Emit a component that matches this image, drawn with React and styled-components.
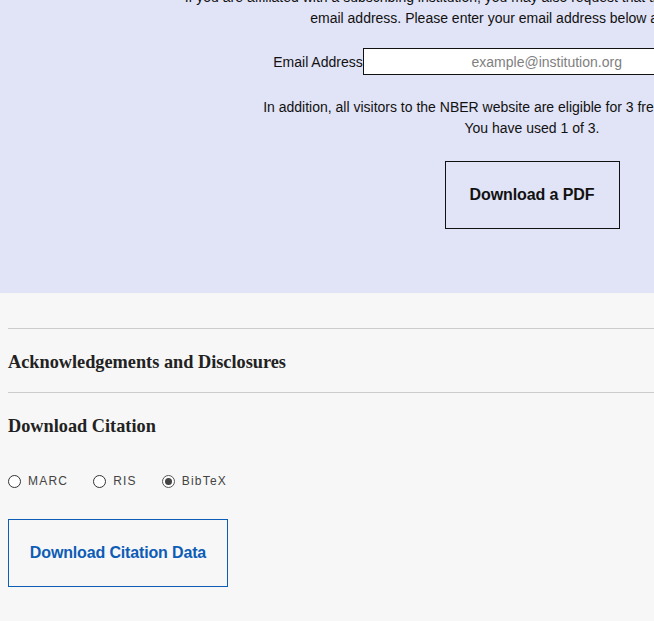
import React, { useState } from "react";
import styled, { createGlobalStyle } from "styled-components";

const GlobalStyle = createGlobalStyle`
  html, body {
    margin: 0;
    padding: 0;
    overflow: hidden;
    background: #f7f7f7;
  }
`;

const Page = styled.div`
  width: 1064px;
  font-family: "Liberation Sans", Arial, sans-serif;
  color: #111;
`;

const Panel = styled.section`
  background: #e1e3f6;
  margin-top: -13px;
  padding: 0 0 64px;
  display: flex;
  flex-direction: column;
  align-items: center;
`;

const Para = styled.p`
  margin: 0;
  font-size: 14px;
  line-height: 21px;
  text-align: center;
  white-space: nowrap;
`;

const EmailRow = styled.label`
  display: flex;
  align-items: center;
  margin: 19px 0 22px;
  font-size: 14px;
`;

const EmailInput = styled.input`
  box-sizing: border-box;
  width: 428px;
  height: 27px;
  margin: 0;
  padding: 0 60px 0 0;
  border: 1px solid #111;
  border-radius: 0;
  background: #fff;
  font-family: inherit;
  font-size: 14px;
  text-align: center;
  &::placeholder {
    color: #808080;
  }
`;

const PdfButton = styled.button`
  box-sizing: border-box;
  width: 175px;
  height: 68px;
  margin-top: 22px;
  border: 1px solid #111;
  background: transparent;
  font-family: "Liberation Sans", Arial, sans-serif;
  font-weight: bold;
  font-size: 16px;
  letter-spacing: -0.1px;
  color: #111;
`;

const Details = styled.section`
  padding: 35px 0 0 8px;
  display: flex;
  flex-direction: column;
`;

const Block = styled.div`
  border-top: 1px solid #cccccc;
  padding: ${({ $pad }) => $pad || "0"};
`;

const Heading = styled.h3`
  margin: 0;
  font-family: "Liberation Serif", "Times New Roman", serif;
  font-weight: bold;
  font-size: 18.3px;
  line-height: 22px;
  color: #222;
`;

const RadioGroup = styled.div`
  display: flex;
  align-items: center;
  gap: 25px;
  margin-top: 37px;
`;

const RadioLabel = styled.label`
  display: flex;
  align-items: center;
  gap: 7px;
  font-size: 12px;
  letter-spacing: 1.2px;
  color: #444;
`;

const Radio = styled.input.attrs({ type: "radio" })`
  appearance: none;
  box-sizing: border-box;
  width: 13px;
  height: 13px;
  margin: 0;
  border: 1px solid #333;
  border-radius: 50%;
  background: #fff;
  display: grid;
  place-items: center;
  &:checked {
    border-color: #555;
  }
  &:checked::after {
    content: "";
    width: 7px;
    height: 7px;
    border-radius: 50%;
    background: #444;
  }
`;

const CitationButton = styled.button`
  box-sizing: border-box;
  width: 220px;
  height: 68px;
  margin-top: 31px;
  border: 1px solid #0d5cb6;
  background: transparent;
  font-family: "Liberation Sans", Arial, sans-serif;
  font-weight: bold;
  font-size: 16px;
  letter-spacing: -0.15px;
  color: #0d5cb6;
`;

const formats = ["MARC", "RIS", "BibTeX"];

const App = () => {
  const [format, setFormat] = useState("BibTeX");

  return (
    <Page>
      <GlobalStyle />
      <Panel>
        <Para>
          If you are affiliated with a subscribing institution, you may also request that the working paper be emailed to your
          <br />
          email address. Please enter your email address below and click submit.
        </Para>
        <EmailRow>
          Email Address
          <EmailInput type="email" placeholder="example@institution.org" />
        </EmailRow>
        <Para>
          In addition, all visitors to the NBER website are eligible for 3 free downloads each year.
          <br />
          You have used 1 of 3.
        </Para>
        <PdfButton>Download a PDF</PdfButton>
      </Panel>
      <Details>
        <Block $pad="22px 0 19px">
          <Heading>Acknowledgements and Disclosures</Heading>
        </Block>
        <Block $pad="22px 0 0">
          <Heading>Download Citation</Heading>
          <RadioGroup>
            {formats.map((f) => (
              <RadioLabel key={f}>
                <Radio
                  name="format"
                  checked={format === f}
                  onChange={() => setFormat(f)}
                />
                {f}
              </RadioLabel>
            ))}
          </RadioGroup>
          <CitationButton>Download Citation Data</CitationButton>
        </Block>
      </Details>
    </Page>
  );
};

export default App;
